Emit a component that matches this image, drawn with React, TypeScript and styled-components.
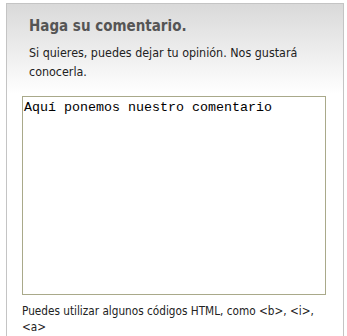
import React from "react";
import styled, { createGlobalStyle } from "styled-components";

const Global = createGlobalStyle`
  html, body { margin: 0; padding: 0; background: #fff; }
  body { font-family: "DejaVu Sans", Verdana, sans-serif; }
`;

const Panel = styled.section`
  margin: 3px 0 0 6px;
  width: 338px;
  height: 340px;
  border: 1px solid #c4c4c4;
  border-bottom: none;
  background: linear-gradient(to bottom, #d9d9d9 0px, #ffffff 90px, #ffffff 100%);
  padding: 0 16px 0 15px;
  box-sizing: border-box;
`;

const Header = styled.div`
  padding: 13px 0 0 7px;
`;

const Title = styled.h3`
  margin: 0;
  font-family: "DejaVu Sans Condensed", "DejaVu Sans", Verdana, sans-serif;
  font-stretch: semi-condensed;
  font-weight: bold;
  font-size: 15px;
  line-height: 18px;
  color: #555;
`;

const Intro = styled.p`
  margin: 8px 0 0;
  font-family: "DejaVu Sans Condensed", "DejaVu Sans", Verdana, sans-serif;
  font-stretch: semi-condensed;
  font-size: 12.4px;
  line-height: 19px;
  color: #222;
`;

const TextArea = styled.textarea`
  display: block;
  margin-top: 15px;
  width: 304px;
  height: 199px;
  box-sizing: border-box;
  border: 1px solid #a9a98a;
  padding: 3px 1px;
  resize: none;
  font-family: "Liberation Mono", "Courier New", monospace;
  font-size: 13.33px;
  line-height: 15px;
  color: #000;
  background: #fff;
  outline: none;
`;

const Hint = styled.p`
  margin: 8px 0 0;
  font-family: "DejaVu Sans Condensed", "DejaVu Sans", Verdana, sans-serif;
  font-stretch: semi-condensed;
  font-size: 11.7px;
  line-height: 16px;
  color: #222;
`;

export default function App() {
  return (
    <>
      <Global />
      <Panel>
        <Header>
          <Title>Haga su comentario.</Title>
          <Intro>Si quieres, puedes dejar tu opinión. Nos gustará conocerla.</Intro>
        </Header>
        <TextArea defaultValue="Aquí ponemos nuestro comentario" />
        <Hint>Puedes utilizar algunos códigos HTML, como &lt;b&gt;, &lt;i&gt;, &lt;a&gt;</Hint>
      </Panel>
    </>
  );
}
